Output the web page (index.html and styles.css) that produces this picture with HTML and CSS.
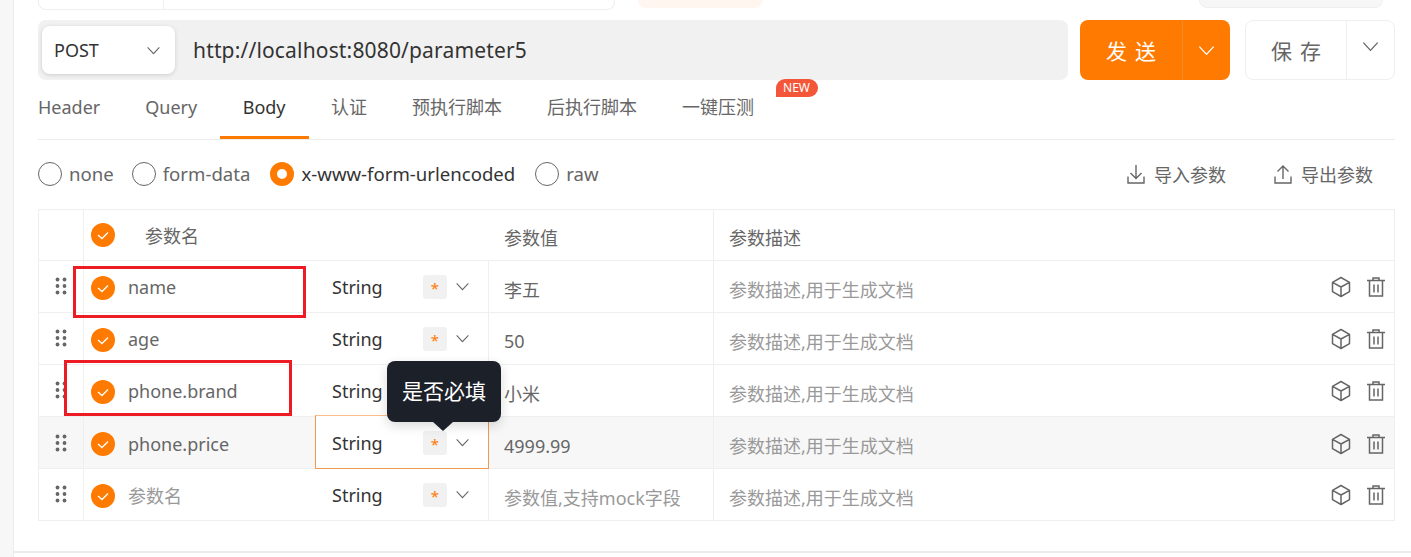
FILE: index.html
```html
<!DOCTYPE html>
<html lang="en">
<head>
  <meta charset="UTF-8">
  <meta name="viewport" content="width=device-width, initial-scale=1.0">
  <title>Parameter request</title>
  <link rel="stylesheet" href="styles.css">
</head>
<body>

  <svg class="icon-defs" aria-hidden="true">
    <symbol id="chevron" viewBox="0 0 16 10"><path d="M1.5 1.5 8 8.500l6.500-7" fill="none" stroke="currentColor" stroke-width="1.200"/></symbol>
    <symbol id="check" viewBox="0 0 24 24"><circle cx="12" cy="12" r="12" fill="#ff7a00"/><path d="M7 12l4 3.500 6-6" fill="none" stroke="#fff" stroke-width="1.300"/></symbol>
    <symbol id="drag" viewBox="0 0 12 18"><g fill="#666"><circle cx="2.500" cy="2.500" r="1.900"/><circle cx="9.500" cy="2.500" r="1.900"/><circle cx="2.500" cy="9" r="1.900"/><circle cx="9.500" cy="9" r="1.900"/><circle cx="2.500" cy="15.500" r="1.900"/><circle cx="9.500" cy="15.500" r="1.900"/></g></symbol>
    <symbol id="cube" viewBox="0 0 20 22"><path d="M10 1.500 18.500 6.300v9.400L10 20.500l-8.500-4.800V6.300zM1.500 6.300 10 11l8.500-4.700M10 11v9.500" fill="none" stroke="#666" stroke-width="1.500" stroke-linejoin="round"/></symbol>
    <symbol id="trash" viewBox="0 0 20 22"><path d="M1 4.500h18M7 4.500V2h6v2.500M3.500 4.500v15.500h13V4.500M8 8.500v8M12 8.500v8" fill="none" stroke="#666" stroke-width="1.500"/></symbol>
    <symbol id="import" viewBox="0 0 18 20"><path d="M9 1v13M3.500 9 9 14.500 14.500 9M1 12.500V19h16v-6.500" fill="none" stroke="#666" stroke-width="1.400"/></symbol>
    <symbol id="export" viewBox="0 0 18 20"><path d="M9 15V2M3.500 7.500 9 2l5.500 5.500M1 12.500V19h16v-6.500" fill="none" stroke="#666" stroke-width="1.400"/></symbol>
  </svg>

  <div class="page">
    <div class="gutter"></div>

    <main class="main">
      <div class="top-strip">
        <div class="top-card"><span class="top-card-left"></span></div>
        <div class="top-peach"></div>
        <div class="top-gray"></div>
      </div>

      <div class="request-row">
        <div class="url-bar">
          <div class="method">
            <span>POST</span>
            <svg class="chevron"><use href="#chevron"/></svg>
          </div>
          <span class="url">http://localhost:8080/parameter5</span>
        </div>
        <div class="split-btn send">
          <span class="split-label">发送</span>
          <span class="split-arrow"><svg class="chevron-lg"><use href="#chevron"/></svg></span>
        </div>
        <div class="split-btn save">
          <span class="split-label">保存</span>
          <span class="split-arrow"><svg class="chevron-lg"><use href="#chevron"/></svg></span>
        </div>
      </div>

      <nav class="tabs">
        <span class="tab">Header</span>
        <span class="tab">Query</span>
        <span class="tab active">Body</span>
        <span class="tab">认证</span>
        <span class="tab">预执行脚本</span>
        <span class="tab">后执行脚本</span>
        <span class="tab">一键压测<span class="badge-new">NEW</span></span>
      </nav>

      <div class="body-types">
        <label class="radio"><i class="dot"></i>none</label>
        <label class="radio"><i class="dot"></i>form-data</label>
        <label class="radio checked"><i class="dot"></i>x-www-form-urlencoded</label>
        <label class="radio"><i class="dot"></i>raw</label>
        <div class="param-actions">
          <span class="param-action"><svg class="action-icon"><use href="#import"/></svg>导入参数</span>
          <span class="param-action"><svg class="action-icon"><use href="#export"/></svg>导出参数</span>
        </div>
      </div>

      <div class="params">
        <div class="param-row head">
          <div class="cell"></div>
          <div class="cell name-head"><svg class="check"><use href="#check"/></svg><span>参数名</span></div>
          <div class="cell value">参数值</div>
          <div class="cell desc">参数描述</div>
        </div>

        <div class="param-row">
          <div class="cell drag-cell"><svg class="drag"><use href="#drag"/></svg></div>
          <div class="cell name"><svg class="check"><use href="#check"/></svg>name</div>
          <div class="cell type"><span class="type-name">String</span><span class="star">*</span><svg class="chevron"><use href="#chevron"/></svg></div>
          <div class="cell value">李五</div>
          <div class="cell desc"><span class="hint">参数描述,用于生成文档</span><svg class="row-icon"><use href="#cube"/></svg><svg class="row-icon"><use href="#trash"/></svg></div>
        </div>

        <div class="param-row">
          <div class="cell drag-cell"><svg class="drag"><use href="#drag"/></svg></div>
          <div class="cell name"><svg class="check"><use href="#check"/></svg>age</div>
          <div class="cell type"><span class="type-name">String</span><span class="star">*</span><svg class="chevron"><use href="#chevron"/></svg></div>
          <div class="cell value">50</div>
          <div class="cell desc"><span class="hint">参数描述,用于生成文档</span><svg class="row-icon"><use href="#cube"/></svg><svg class="row-icon"><use href="#trash"/></svg></div>
        </div>

        <div class="param-row">
          <div class="cell drag-cell"><svg class="drag"><use href="#drag"/></svg></div>
          <div class="cell name"><svg class="check"><use href="#check"/></svg>phone.brand</div>
          <div class="cell type"><span class="type-name">String</span><span class="star">*</span><svg class="chevron"><use href="#chevron"/></svg></div>
          <div class="cell value">小米</div>
          <div class="cell desc"><span class="hint">参数描述,用于生成文档</span><svg class="row-icon"><use href="#cube"/></svg><svg class="row-icon"><use href="#trash"/></svg></div>
        </div>

        <div class="param-row hovered">
          <div class="cell drag-cell"><svg class="drag"><use href="#drag"/></svg></div>
          <div class="cell name"><svg class="check"><use href="#check"/></svg>phone.price</div>
          <div class="cell type focused">
            <span class="type-name">String</span><span class="star">*</span><svg class="chevron"><use href="#chevron"/></svg>
            <div class="tooltip">是否必填</div>
          </div>
          <div class="cell value">4999.99</div>
          <div class="cell desc"><span class="hint">参数描述,用于生成文档</span><svg class="row-icon"><use href="#cube"/></svg><svg class="row-icon"><use href="#trash"/></svg></div>
        </div>

        <div class="param-row">
          <div class="cell drag-cell"><svg class="drag"><use href="#drag"/></svg></div>
          <div class="cell name placeholder"><svg class="check"><use href="#check"/></svg>参数名</div>
          <div class="cell type"><span class="type-name">String</span><span class="star">*</span><svg class="chevron"><use href="#chevron"/></svg></div>
          <div class="cell value placeholder">参数值,支持mock字段</div>
          <div class="cell desc"><span class="hint">参数描述,用于生成文档</span><svg class="row-icon"><use href="#cube"/></svg><svg class="row-icon"><use href="#trash"/></svg></div>
        </div>

        <div class="mark mark-name"></div>
        <div class="mark mark-brand"></div>
      </div>
    </main>
  </div>

</body>
</html>
```

FILE: styles.css
```css
* {
  box-sizing: border-box;
}

body {
  margin: 0;
  height: 557px;
  overflow: hidden;
  background: #fff;
  color: #666;
  font-family: "Noto Sans", "Noto Sans CJK SC", sans-serif;
  font-size: 18px;
}

.icon-defs {
  display: none;
}

.page {
  display: flex;
  height: 557px;
}

.gutter {
  width: 14px;
  background: #f7f7f7;
  border-right: 1px solid #ececec;
}

.main {
  flex: 1;
  height: 553px;
  padding: 0 16px 0 24px;
  border-bottom: 2px solid #ececec;
}

/* strip of the panel above, cut off by the window */
.top-strip {
  display: flex;
  height: 10px;
}

.top-card {
  width: 577px;
  height: 10px;
  border: 1px solid #efefef;
  border-top: 0;
  border-radius: 0 0 8px 8px;
}

.top-card-left {
  display: block;
  width: 125px;
  height: 9px;
  border-right: 1px solid #efefef;
}

.top-peach {
  width: 125px;
  height: 8px;
  margin-left: 23px;
  background: #fff6f0;
  border-radius: 0 0 8px 8px;
}

.top-gray {
  width: 184px;
  height: 8px;
  margin-left: 436px;
  background: #f7f7f7;
  border: 1px solid #efefef;
  border-top: 0;
  border-radius: 0 0 8px 8px;
}

.request-row {
  display: flex;
  margin-top: 10px;
  height: 60px;
}

.url-bar {
  display: flex;
  align-items: center;
  width: 1030px;
  padding-left: 4px;
  background: #f1f1f1;
  border-radius: 8px;
}

.method {
  display: flex;
  align-items: center;
  justify-content: space-between;
  width: 133px;
  height: 48px;
  padding: 0 14px 0 12px;
  background: #fff;
  border-radius: 8px;
  box-shadow: 0 1px 4px rgba(0, 0, 0, 0.15);
  color: #333;
}

.url {
  margin-left: 18px;
  color: #333;
  font-size: 21px;
  letter-spacing: 0.16px;
}

.chevron {
  flex: none;
  width: 15px;
  height: 9px;
  color: #666;
}

.split-btn {
  display: flex;
  width: 150px;
  border-radius: 8px;
}

.split-label {
  display: flex;
  align-items: center;
  justify-content: center;
  flex: 1;
  font-size: 21px;
  letter-spacing: 8px;
  padding-left: 8px;
}

.split-arrow {
  display: flex;
  align-items: center;
  justify-content: center;
  width: 48px;
}

.chevron-lg {
  width: 19px;
  height: 11px;
}

.send {
  margin-left: 12px;
  background: #ff7a00;
  color: #fff;
}

.send .split-arrow {
  border-left: 1px solid #f08a2c;
}

.save {
  margin-left: 15px;
  border: 1px solid #efefef;
}

.save .split-arrow {
  border-left: 1px solid #efefef;
  padding-bottom: 8px;
}

.tabs {
  display: flex;
  height: 60px;
  border-bottom: 1px solid #ececec;
}

.tab {
  position: relative;
  height: 59px;
  padding: 12px 22.5px 0;
  line-height: 30px;
}

.tab:first-child {
  padding-left: 0;
}

.tab.active {
  padding: 12px 23px 0;
  color: #333;
  border-bottom: 3px solid #ff7a00;
}

.badge-new {
  position: absolute;
  top: -1px;
  left: 116px;
  width: 42px;
  height: 18px;
  background: #f4563a;
  border-radius: 9px 9px 9px 0;
  color: #fff;
  font-size: 12px;
  line-height: 18px;
  text-align: center;
}

.body-types {
  display: flex;
  align-items: center;
  height: 69px;
  padding-bottom: 2px;
}

.radio {
  display: flex;
  align-items: center;
  gap: 7px;
  margin-right: 20px;
  font-size: 18.6px;
}

.radio:first-child {
  margin-right: 18px;
}

.radio.checked {
  color: #333;
}

.dot {
  width: 24px;
  height: 24px;
  border: 1px solid #666;
  border-radius: 50%;
}

.checked .dot {
  border: 7px solid #ff7a00;
}

.param-actions {
  display: flex;
  gap: 48px;
  margin-left: auto;
  margin-right: 22px;
}

.param-action {
  display: flex;
  align-items: center;
  gap: 9px;
}

.action-icon {
  width: 18px;
  height: 20px;
}

.params {
  position: relative;
  border: 1px solid #efefef;
}

.param-row {
  display: grid;
  grid-template-columns: 45px 231px 174px 225px 1fr;
  height: 52px;
  border-top: 1px solid #efefef;
}

.param-row.head {
  grid-template-columns: 45px 405px 225px 1fr;
  height: 50px;
  border-top: 0;
}

.hovered {
  background: #f7f7f7;
}

.cell {
  display: flex;
  align-items: center;
  min-width: 0;
}

.drag-cell {
  justify-content: center;
  padding-bottom: 1px;
  border-right: 1px solid #efefef;
}

.head .cell:first-child {
  border-right: 1px solid #efefef;
}

.drag {
  width: 12px;
  height: 18px;
}

.check {
  flex: none;
  width: 24px;
  height: 24px;
  margin-right: 13px;
}

.name {
  padding-left: 7px;
  padding-top: 1px;
}

.name .check {
  margin-top: 1px;
}

.name-head {
  padding-left: 7px;
  padding-bottom: 1px;
}

.name-head span {
  margin-left: 17px;
}

.type {
  position: relative;
  padding: 0 18px 0 17px;
  border-right: 1px solid #efefef;
  color: #333;
}

.type-name {
  width: 91px;
}

.star {
  width: 24px;
  height: 24px;
  margin-right: 8px;
  background: #f1f1f1;
  border-radius: 3px;
  color: #ff7a00;
  font-size: 15px;
  line-height: 27px;
  text-align: center;
}

/* select that has focus: box sits over the row borders */
.focused {
  margin-top: -2px;
  height: 54px;
  padding-top: 1px;
  padding-left: 16px;
  background: #fff;
  border: 1px solid #ef9a4e;
  border-top-color: #fbbf8b;
}

.tooltip {
  position: absolute;
  top: -55px;
  left: 71px;
  z-index: 2;
  width: 114px;
  height: 61px;
  background: #1c2029;
  border-radius: 8px;
  box-shadow: 0 4px 12px rgba(0, 0, 0, 0.15);
  color: #fff;
  font-size: 21px;
  line-height: 61px;
  text-align: center;
}

.tooltip::after {
  content: "";
  position: absolute;
  top: 61px;
  left: 46px;
  border: 10px solid transparent;
  border-top: 9px solid #1c2029;
  border-bottom: 0;
}

.value,
.desc {
  padding-left: 15px;
}

.value {
  border-right: 1px solid #efefef;
  padding-top: 5px;
}

.desc {
  padding-top: 4px;
  padding-right: 8px;
}

.head .value,
.head .desc {
  padding-top: 3px;
}

.hint {
  margin-right: auto;
  color: #999;
}

.placeholder {
  color: #999;
}

.row-icon {
  width: 20px;
  height: 22px;
  margin-left: 15px;
  margin-bottom: 3px;
}

/* red annotation boxes drawn on the screenshot */
.mark {
  position: absolute;
  z-index: 1;
  border: 3px solid #ed1c24;
}

.mark-name {
  top: 56px;
  left: 34px;
  width: 233px;
  height: 52px;
}

.mark-brand {
  top: 150px;
  left: 25px;
  width: 228px;
  height: 56px;
}
```
